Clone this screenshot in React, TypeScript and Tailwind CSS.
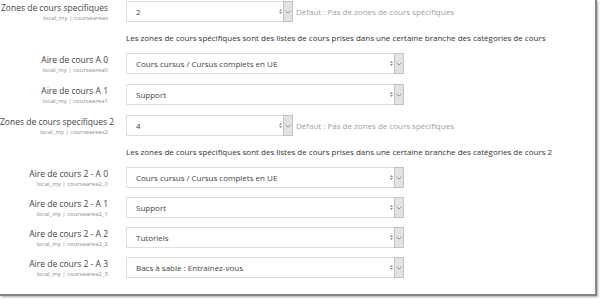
import React from "react";

const font = { fontFamily: '"Open Sans", "Noto Sans", sans-serif' };

function Sel({ value, wide }: { value: string; wide?: boolean }) {
  return (
    <div
      className={
        "flex h-[21px] shrink-0 border border-[#dedede] bg-white " +
        (wide ? "w-[278px]" : "w-[167px]")
      }
    >
      <div className="flex flex-1 items-center pl-[9px] text-[8px] text-[#444]">
        {value}
      </div>
      <div className="flex items-center pr-[1px]">
        <svg width="3" height="7" viewBox="0 0 3 7">
          <path d="M0 3 L1.5 1 L3 3 Z" fill="#888" />
          <path d="M0 4 L1.5 6 L3 4 Z" fill="#888" />
        </svg>
      </div>
      <div className="-my-px -mr-px flex w-[10px] items-center justify-center border border-[#c2c2c2] bg-[#e3e3e3]">
        <svg width="6" height="4" viewBox="0 0 6 4">
          <path d="M0.5 0.8 L3 3.2 L5.5 0.8" fill="none" stroke="#8a8a8a" strokeWidth="0.9" />
        </svg>
      </div>
    </div>
  );
}

function Row({
  label,
  sub,
  value,
  wide,
  hint,
  mb,
}: {
  label: string;
  sub: string;
  value: string;
  wide?: boolean;
  hint?: string;
  mb: string;
}) {
  return (
    <div className={"flex " + mb}>
      <div className="w-[108px] shrink-0 pt-[1px] text-right">
        <div className="whitespace-nowrap text-[8.5px] leading-[11px] text-[#444]">{label}</div>
        <div className="mt-[1px] whitespace-nowrap text-[6px] leading-[8px] text-[#8c8c8c]">{sub}</div>
      </div>
      <div className="ml-[18px] flex items-center">
        <Sel value={value} wide={wide} />
        {hint && (
          <span className="ml-[3px] whitespace-nowrap text-[8px] text-[#a0a0a0]">{hint}</span>
        )}
      </div>
    </div>
  );
}

function Desc({ text, mb }: { text: string; mb: string }) {
  return (
    <div className={"flex " + mb}>
      <div className="w-[108px] shrink-0" />
      <div className="ml-[18px] h-[12px] whitespace-nowrap text-[8px] leading-[12px] text-[#333]">
        {text}
      </div>
    </div>
  );
}

export default function App() {
  return (
    <div className="h-[300px] w-[600px] overflow-hidden bg-white" style={font}>
      <div className="h-[296px] w-[597px] overflow-hidden border-b-2 border-r-2 border-[#858585] bg-white pt-[1px] shadow-[1px_1px_2px_rgba(0,0,0,0.35)]">
        <Row
          label="Zones de cours specifiques"
          sub="local_my | courseareas"
          value="2"
          hint="Défaut : Pas de zones de cours spécifiques"
          mb="mb-[10px]"
        />
        <Desc
          text="Les zones de cours spécifiques sont des listes de cours prises dans une certaine branche des catégories de cours"
          mb="mb-[9px]"
        />
        <Row label="Aire de cours A 0" sub="local_my | coursearea0" value="Cours cursus / Cursus complets en UE" wide mb="mb-[10px]" />
        <Row label="Aire de cours A 1" sub="local_my | coursearea1" value="Support" wide mb="mb-[10px]" />
        <Row
          label="Zones de cours specifiques 2"
          sub="local_my | courseareas2"
          value="4"
          hint="Défaut : Pas de zones de cours spécifiques"
          mb="mb-[10px]"
        />
        <Desc
          text="Les zones de cours spécifiques sont des listes de cours prises dans une certaine branche des catégories de cours 2"
          mb="mb-[9px]"
        />
        <Row label="Aire de cours 2 - A 0" sub="local_my | coursearea2_0" value="Cours cursus / Cursus complets en UE" wide mb="mb-[9px]" />
        <Row label="Aire de cours 2 - A 1" sub="local_my | coursearea2_1" value="Support" wide mb="mb-[9px]" />
        <Row label="Aire de cours 2 - A 2" sub="local_my | coursearea2_2" value="Tutoriels" wide mb="mb-[9px]" />
        <Row label="Aire de cours 2 - A 3" sub="local_my | coursearea2_3" value="Bacs à sable : Entrainez-vous" wide mb="mb-[9px]" />
      </div>
    </div>
  );
}
